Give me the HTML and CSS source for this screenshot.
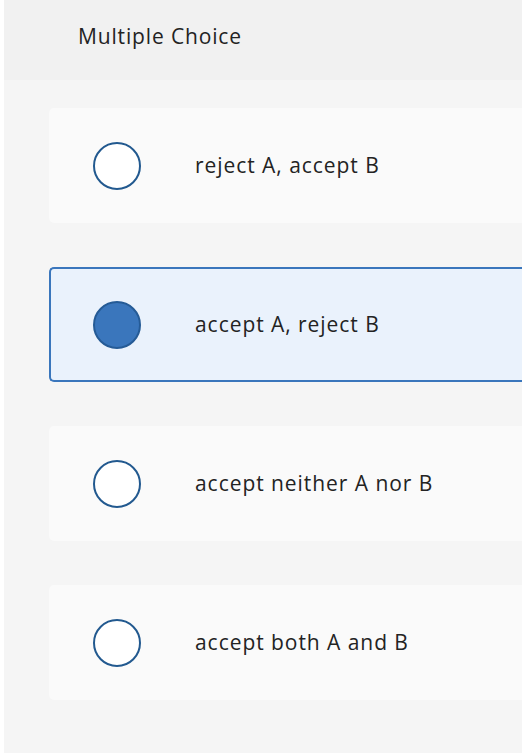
FILE: index.html
```html
<!DOCTYPE html>
<html>
<head>
<meta charset="utf-8">
<link rel="stylesheet" href="styles.css">
</head>
<body>
<div class="page">
  <header class="header"><span class="title">Multiple Choice</span></header>
  <main class="choices">
    <div class="choice">
      <span class="radio"></span>
      <span class="label">reject A, accept B</span>
    </div>
    <div class="choice selected">
      <span class="radio"></span>
      <span class="label">accept A, reject B</span>
    </div>
    <div class="choice">
      <span class="radio"></span>
      <span class="label">accept neither A nor B</span>
    </div>
    <div class="choice">
      <span class="radio"></span>
      <span class="label">accept both A and B</span>
    </div>
  </main>
</div>
</body>
</html>
```

FILE: styles.css
```css
html, body {
  margin: 0;
  padding: 0;
  background: #ffffff;
  height: 100%;
  overflow: hidden;
}
.page {
  margin-left: 4px;
  height: 753px;
  background: #f5f5f5;
  font-family: "Open Sans", "Lato", sans-serif;
  color: #232323;
}
.header {
  height: 80px;
  background: #f1f1f1;
  display: flex;
  align-items: center;
  padding-left: 74px;
  box-sizing: border-box;
}
.title {
  font-size: 21px;
  margin-top: -9px;
  letter-spacing: 0.85px;
}
.choices {
  padding: 28px 0 0 45px;
  display: flex;
  flex-direction: column;
  gap: 44px;
}
.choice {
  height: 115px;
  box-sizing: border-box;
  background: #fafafa;
  border-radius: 5px 0 0 5px;
  display: flex;
  align-items: center;
  padding-left: 44px;
}
.choice.selected {
  background: #eaf2fc;
  border: 2px solid #3a76bc;
  border-right: none;
  padding-left: 42px;
}
.radio {
  width: 48px;
  height: 48px;
  box-sizing: border-box;
  border-radius: 50%;
  border: 2px solid #22598f;
  background: #ffffff;
  flex: none;
}
.selected .radio {
  background: #3a76bc;
  border-color: #255b96;
}
.label {
  margin-left: 54px;
  font-size: 21px;
  margin-top: -1px;
  letter-spacing: 0.95px;
}
```
